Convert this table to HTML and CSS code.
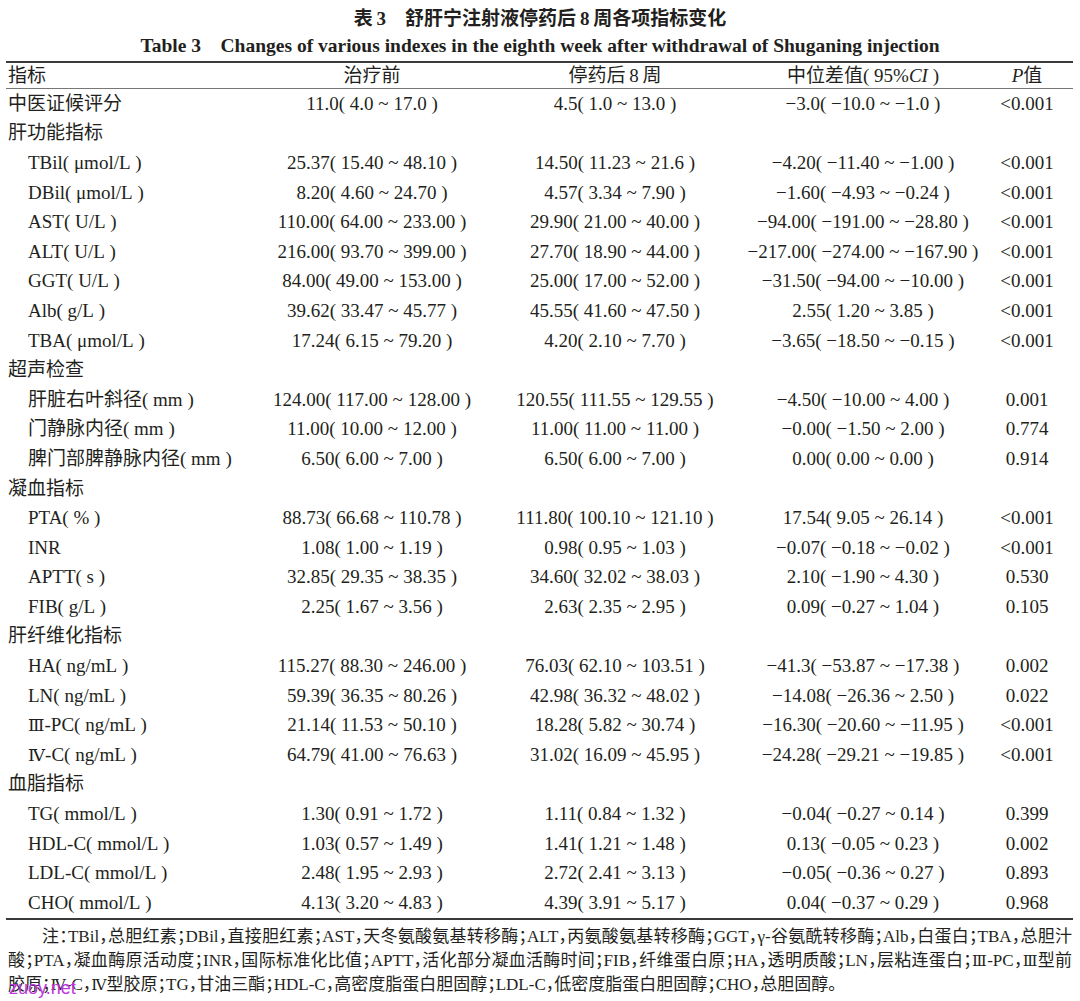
FILE: index.html
```html
<!DOCTYPE html>
<html lang="zh-CN">
<head>
<meta charset="utf-8">
<title>表3 舒肝宁注射液停药后8周各项指标变化</title>
<link rel="stylesheet" href="styles.css">
</head>
<body>
<div class="caption">
  <div class="cap-cn">表&#8201;3&emsp;舒肝宁注射液停药后&#8201;8&#8201;周各项指标变化</div>
  <div class="cap-en">Table 3&emsp;Changes of various indexes in the eighth week after withdrawal of Shuganing injection</div>
</div>
<div class="table">
  <div class="row head"><span>指标</span><span>治疗前</span><span>停药后&#8201;8&#8201;周</span><span>中位差值(&#8197;95%<i>CI</i>&#8197;)</span><span><i>P</i>值</span></div>
  <div class="row"><span>中医证候评分</span><span>11.0(&#8197;4.0 ~ 17.0&#8197;)</span><span>4.5(&#8197;1.0 ~ 13.0&#8197;)</span><span>−3.0(&#8197;−10.0 ~ −1.0&#8197;)</span><span>&lt;0.001</span></div>
  <div class="row"><span>肝功能指标</span><span></span><span></span><span></span><span></span></div>
  <div class="row sub"><span>TBil(&#8197;μmol/L&#8197;)</span><span>25.37(&#8197;15.40 ~ 48.10&#8197;)</span><span>14.50(&#8197;11.23 ~ 21.6&#8197;)</span><span>−4.20(&#8197;−11.40 ~ −1.00&#8197;)</span><span>&lt;0.001</span></div>
  <div class="row sub"><span>DBil(&#8197;μmol/L&#8197;)</span><span>8.20(&#8197;4.60 ~ 24.70&#8197;)</span><span>4.57(&#8197;3.34 ~ 7.90&#8197;)</span><span>−1.60(&#8197;−4.93 ~ −0.24&#8197;)</span><span>&lt;0.001</span></div>
  <div class="row sub"><span>AST(&#8197;U/L&#8197;)</span><span>110.00(&#8197;64.00 ~ 233.00&#8197;)</span><span>29.90(&#8197;21.00 ~ 40.00&#8197;)</span><span>−94.00(&#8197;−191.00 ~ −28.80&#8197;)</span><span>&lt;0.001</span></div>
  <div class="row sub"><span>ALT(&#8197;U/L&#8197;)</span><span>216.00(&#8197;93.70 ~ 399.00&#8197;)</span><span>27.70(&#8197;18.90 ~ 44.00&#8197;)</span><span>−217.00(&#8197;−274.00 ~ −167.90&#8197;)</span><span>&lt;0.001</span></div>
  <div class="row sub"><span>GGT(&#8197;U/L&#8197;)</span><span>84.00(&#8197;49.00 ~ 153.00&#8197;)</span><span>25.00(&#8197;17.00 ~ 52.00&#8197;)</span><span>−31.50(&#8197;−94.00 ~ −10.00&#8197;)</span><span>&lt;0.001</span></div>
  <div class="row sub"><span>Alb(&#8197;g/L&#8197;)</span><span>39.62(&#8197;33.47 ~ 45.77&#8197;)</span><span>45.55(&#8197;41.60 ~ 47.50&#8197;)</span><span>2.55(&#8197;1.20 ~ 3.85&#8197;)</span><span>&lt;0.001</span></div>
  <div class="row sub"><span>TBA(&#8197;μmol/L&#8197;)</span><span>17.24(&#8197;6.15 ~ 79.20&#8197;)</span><span>4.20(&#8197;2.10 ~ 7.70&#8197;)</span><span>−3.65(&#8197;−18.50 ~ −0.15&#8197;)</span><span>&lt;0.001</span></div>
  <div class="row"><span>超声检查</span><span></span><span></span><span></span><span></span></div>
  <div class="row sub"><span>肝脏右叶斜径(&#8197;mm&#8197;)</span><span>124.00(&#8197;117.00 ~ 128.00&#8197;)</span><span>120.55(&#8197;111.55 ~ 129.55&#8197;)</span><span>−4.50(&#8197;−10.00 ~ 4.00&#8197;)</span><span>0.001</span></div>
  <div class="row sub"><span>门静脉内径(&#8197;mm&#8197;)</span><span>11.00(&#8197;10.00 ~ 12.00&#8197;)</span><span>11.00(&#8197;11.00 ~ 11.00&#8197;)</span><span>−0.00(&#8197;−1.50 ~ 2.00&#8197;)</span><span>0.774</span></div>
  <div class="row sub"><span>脾门部脾静脉内径(&#8197;mm&#8197;)</span><span>6.50(&#8197;6.00 ~ 7.00&#8197;)</span><span>6.50(&#8197;6.00 ~ 7.00&#8197;)</span><span>0.00(&#8197;0.00 ~ 0.00&#8197;)</span><span>0.914</span></div>
  <div class="row"><span>凝血指标</span><span></span><span></span><span></span><span></span></div>
  <div class="row sub"><span>PTA(&#8197;%&#8197;)</span><span>88.73(&#8197;66.68 ~ 110.78&#8197;)</span><span>111.80(&#8197;100.10 ~ 121.10&#8197;)</span><span>17.54(&#8197;9.05 ~ 26.14&#8197;)</span><span>&lt;0.001</span></div>
  <div class="row sub"><span>INR</span><span>1.08(&#8197;1.00 ~ 1.19&#8197;)</span><span>0.98(&#8197;0.95 ~ 1.03&#8197;)</span><span>−0.07(&#8197;−0.18 ~ −0.02&#8197;)</span><span>&lt;0.001</span></div>
  <div class="row sub"><span>APTT(&#8197;s&#8197;)</span><span>32.85(&#8197;29.35 ~ 38.35&#8197;)</span><span>34.60(&#8197;32.02 ~ 38.03&#8197;)</span><span>2.10(&#8197;−1.90 ~ 4.30&#8197;)</span><span>0.530</span></div>
  <div class="row sub"><span>FIB(&#8197;g/L&#8197;)</span><span>2.25(&#8197;1.67 ~ 3.56&#8197;)</span><span>2.63(&#8197;2.35 ~ 2.95&#8197;)</span><span>0.09(&#8197;−0.27 ~ 1.04&#8197;)</span><span>0.105</span></div>
  <div class="row"><span>肝纤维化指标</span><span></span><span></span><span></span><span></span></div>
  <div class="row sub"><span>HA(&#8197;ng/mL&#8197;)</span><span>115.27(&#8197;88.30 ~ 246.00&#8197;)</span><span>76.03(&#8197;62.10 ~ 103.51&#8197;)</span><span>−41.3(&#8197;−53.87 ~ −17.38&#8197;)</span><span>0.002</span></div>
  <div class="row sub"><span>LN(&#8197;ng/mL&#8197;)</span><span>59.39(&#8197;36.35 ~ 80.26&#8197;)</span><span>42.98(&#8197;36.32 ~ 48.02&#8197;)</span><span>−14.08(&#8197;−26.36 ~ 2.50&#8197;)</span><span>0.022</span></div>
  <div class="row sub"><span><span class="rn">Ⅲ</span>-PC(&#8197;ng/mL&#8197;)</span><span>21.14(&#8197;11.53 ~ 50.10&#8197;)</span><span>18.28(&#8197;5.82 ~ 30.74&#8197;)</span><span>−16.30(&#8197;−20.60 ~ −11.95&#8197;)</span><span>&lt;0.001</span></div>
  <div class="row sub"><span><span class="rn">Ⅳ</span>-C(&#8197;ng/mL&#8197;)</span><span>64.79(&#8197;41.00 ~ 76.63&#8197;)</span><span>31.02(&#8197;16.09 ~ 45.95&#8197;)</span><span>−24.28(&#8197;−29.21 ~ −19.85&#8197;)</span><span>&lt;0.001</span></div>
  <div class="row"><span>血脂指标</span><span></span><span></span><span></span><span></span></div>
  <div class="row sub"><span>TG(&#8197;mmol/L&#8197;)</span><span>1.30(&#8197;0.91 ~ 1.72&#8197;)</span><span>1.11(&#8197;0.84 ~ 1.32&#8197;)</span><span>−0.04(&#8197;−0.27 ~ 0.14&#8197;)</span><span>0.399</span></div>
  <div class="row sub"><span>HDL-C(&#8197;mmol/L&#8197;)</span><span>1.03(&#8197;0.57 ~ 1.49&#8197;)</span><span>1.41(&#8197;1.21 ~ 1.48&#8197;)</span><span>0.13(&#8197;−0.05 ~ 0.23&#8197;)</span><span>0.002</span></div>
  <div class="row sub"><span>LDL-C(&#8197;mmol/L&#8197;)</span><span>2.48(&#8197;1.95 ~ 2.93&#8197;)</span><span>2.72(&#8197;2.41 ~ 3.13&#8197;)</span><span>−0.05(&#8197;−0.36 ~ 0.27&#8197;)</span><span>0.893</span></div>
  <div class="row sub"><span>CHO(&#8197;mmol/L&#8197;)</span><span>4.13(&#8197;3.20 ~ 4.83&#8197;)</span><span>4.39(&#8197;3.91 ~ 5.17&#8197;)</span><span>0.04(&#8197;−0.37 ~ 0.29&#8197;)</span><span>0.968</span></div>
</div>
<div class="notes">
  <div class="nl first">注：TBil，总胆红素；DBil，直接胆红素；AST，天冬氨酸氨基转移酶；ALT，丙氨酸氨基转移酶；GGT，γ-谷氨酰转移酶；Alb，白蛋白；TBA，总胆汁</div>
  <div class="nl">酸；PTA，凝血酶原活动度；INR，国际标准化比值；APTT，活化部分凝血活酶时间；FIB，纤维蛋白原；HA，透明质酸；LN，层粘连蛋白；<span class="rn">Ⅲ</span>-PC，<span class="rn">Ⅲ</span>型前</div>
  <div class="nl last">胶原；<span class="rn">Ⅳ</span>-C，<span class="rn">Ⅳ</span>型胶原；TG，甘油三酯；HDL-C，高密度脂蛋白胆固醇；LDL-C，低密度脂蛋白胆固醇；CHO，总胆固醇。</div>
</div>
<div class="watermark">zuoy.net</div>
</body>
</html>
```

FILE: styles.css
```css
* { box-sizing: border-box; }
html, body { margin: 0; padding: 0; background: #ffffff; }
body {
  width: 1080px;
  height: 1001px;
  overflow: hidden;
  position: relative;
  color: #231f20;
  font-family: "Liberation Serif", "Noto Sans CJK SC", serif;
}
.caption {
  padding-top: 5px;
  text-align: center;
  font-weight: bold;
  line-height: 27px;
  white-space: nowrap;
}
.cap-cn { font-size: 19px; }
.cap-en { font-size: 19.5px; }
.table {
  margin: 2px 7px 0 6px;
  border-top: 2px solid #3a3a3a;
  border-bottom: 2px solid #3a3a3a;
}
.row {
  display: grid;
  grid-template-columns: 244px 244px 242px 254px 74px;
  height: 29.6px;
  align-items: center;
  font-size: 19px;
  line-height: 20px;
  white-space: nowrap;
}
.row.head {
  height: 26px;
  border-bottom: 1px solid #777777;
}
.row > span { text-align: center; }
.row > span:first-child { text-align: left; padding-left: 2px; }
.row.sub > span:first-child { padding-left: 22px; }
.rn { font-family: "DejaVu Serif", "Liberation Serif", "Noto Sans CJK SC", serif; font-size: 0.9em; }
.notes {
  margin: 5px 8px 0 8px;
  font-size: 17px;
  line-height: 24px;
  font-feature-settings: "halt";
}
.nl { white-space: nowrap; text-align: justify; text-align-last: justify; }
.nl.first { text-indent: 2em; }
.nl.last { text-align: left; text-align-last: left; }
.watermark {
  position: absolute;
  left: 9px;
  top: 978px;
  font-family: "Liberation Sans", sans-serif;
  font-size: 18px;
  color: #bf36e0;
}
```
